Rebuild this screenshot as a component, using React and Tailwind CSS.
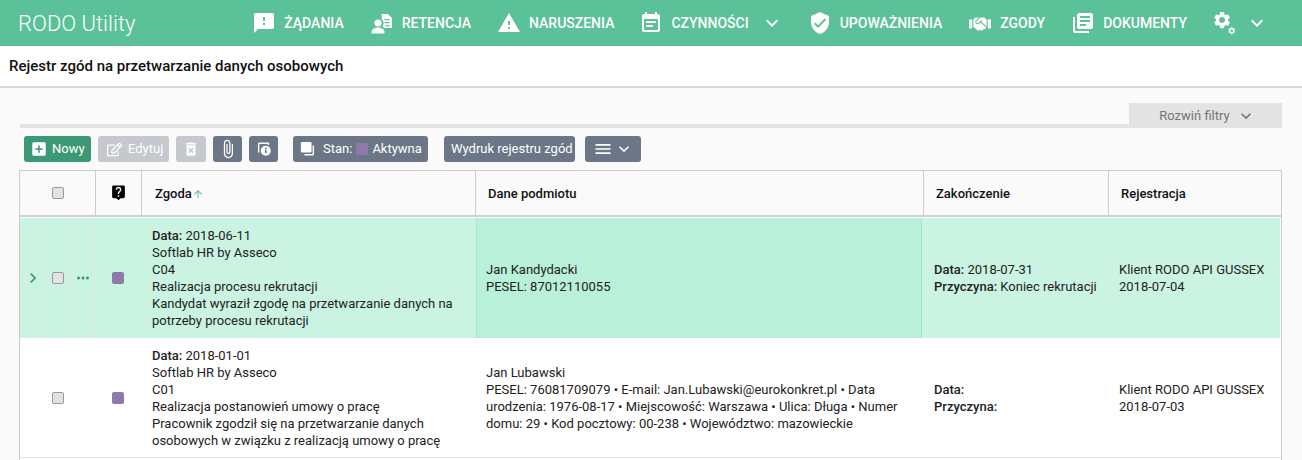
import {
  MdFeedback, MdWarning, MdEventNote, MdVerifiedUser, MdLibraryBooks, MdKeyboardArrowDown,
  MdAddBox, MdDeleteForever, MdAttachFile, MdMenu, MdLiveHelp, MdArrowUpward, MdChevronRight, MdMoreHoriz,
} from 'react-icons/md'
import { FaHandshake, FaRegEdit } from 'react-icons/fa'

const GEAR = 'M19.14 12.94c.04-.3.06-.61.06-.94 0-.32-.02-.64-.07-.94l2.03-1.58c.18-.14.23-.41.12-.61l-1.92-3.32c-.12-.22-.37-.29-.59-.22l-2.39.96c-.5-.38-1.03-.7-1.62-.94l-.36-2.54c-.04-.24-.24-.41-.48-.41h-3.84c-.24 0-.43.17-.47.41l-.36 2.54c-.59.24-1.13.57-1.62.94l-2.39-.96c-.22-.08-.47 0-.59.22L2.74 8.87c-.12.21-.08.47.12.61l2.03 1.58c-.05.3-.09.63-.09.94s.02.64.07.94l-2.03 1.58c-.18.14-.23.41-.12.61l1.92 3.32c.12.22.37.29.59.22l2.39-.96c.5.38 1.03.7 1.62.94l.36 2.54c.05.24.24.41.48.41h3.84c.24 0 .44-.17.47-.41l.36-2.54c.59-.24 1.13-.56 1.62-.94l2.39.96c.22.08.47 0 .59-.22l1.92-3.32c.12-.22.07-.47-.12-.61l-2.01-1.58zM12 15.6c-1.98 0-3.6-1.62-3.6-3.6s1.62-3.6 3.6-3.6 3.6 1.62 3.6 3.6-1.62 3.6-3.6 3.6z'

function PersonDoc({ className }) {
  return (
    <svg viewBox="0 0 24 24" className={className} fill="currentColor">
      <circle cx="8" cy="12" r="3.6" />
      <path d="M1.5 21c0-3 3.6-4.6 6.5-4.6s6.5 1.6 6.5 4.6v1.5h-13z" />
      <path fillRule="evenodd" d="M12 3h6l4 4v10h-7.6c-.6-.7-1.4-1.2-2.2-1.6 1-.9 1.5-2.1 1.5-3.4 0-1.6-.8-3-2-3.8V3zm2.5 5v1.2h5V8zm0 3v1.2h5V11zm1 3v1.2h4V14z" />
    </svg>
  )
}

function Gears({ className }) {
  return (
    <svg viewBox="0 0 24 24" className={className} fill="currentColor">
      <g transform="translate(-1 -1) scale(0.84)"><path d={GEAR} /></g>
      <g transform="translate(14.4 15.4) scale(0.36)"><path d={GEAR} /></g>
    </svg>
  )
}

function StackIcon({ className }) {
  return (
    <svg viewBox="0 0 18 18" className={className} fill="none">
      <rect x="1" y="1" width="12" height="12" rx="1.5" fill="currentColor" />
      <path d="M15 5v9.5a1 1 0 0 1-1 1H5" stroke="currentColor" strokeWidth="1.6" />
    </svg>
  )
}

function InfoIcon({ className }) {
  return (
    <svg viewBox="0 0 18 18" className={className} fill="none">
      <path d="M3 13V3.5a1 1 0 0 1 1-1h10v2" stroke="currentColor" strokeWidth="1.6" />
      <circle cx="11" cy="11" r="5.6" fill="currentColor" />
      <rect x="10.2" y="9.8" width="1.7" height="4" fill="#6b7686" />
      <rect x="10.2" y="7.6" width="1.7" height="1.5" fill="#6b7686" />
    </svg>
  )
}

const navItems = [
  { icon: MdFeedback, label: 'Żądania' },
  { icon: PersonDoc, label: 'Retencja' },
  { icon: MdWarning, label: 'Naruszenia', extra: '-mr-px' },
  { icon: MdEventNote, label: 'Czynności', arrow: true },
  { icon: MdVerifiedUser, label: 'Upoważnienia' },
  { icon: FaHandshake, label: 'Zgody', iconClass: 'px-[1px] py-[2px] translate-y-[1px]' },
  { icon: MdLibraryBooks, label: 'Dokumenty' },
]

function NavItem({ icon: Icon, label, arrow, extra = '', iconClass = '' }) {
  return (
    <a className={`flex items-center gap-2 text-[14px] font-medium uppercase text-white ${extra}`}>
      <Icon className={`w-6 h-6 shrink-0 ${iconClass}`} />
      <span>{label}</span>
      {arrow && <MdKeyboardArrowDown className="w-6 h-6 ml-[3px] -mr-0.5" />}
    </a>
  )
}

function Btn({ className = '', children }) {
  return (
    <button className={`h-[26px] flex items-center rounded-[3px] text-[13px] text-white ${className}`}>
      {children}
    </button>
  )
}

function Check({ className = '' }) {
  return <input type="checkbox" className={`appearance-none block w-3 h-3 rounded-[2px] bg-[#e2e2e2] border border-[#9a9a9a] ${className}`} />
}

const columns = 'grid grid-cols-[76px_46px_334px_448px_185px_173px]'

function Row({ active, consent, subject, end, reg }) {
  const divider = active ? 'border-r border-[#e3ece3]' : 'border-r border-transparent'
  return (
    <div className={`${columns} h-[120px] text-[13px] leading-[17px] text-[#222] ${active ? 'bg-[#caf3e2] mr-[2px] w-[1260px]' : 'bg-white border-b border-[#e4e4e4]'}`}>
      <div className="grid grid-cols-[25px_26px_25px]">
        <div className={`flex items-center justify-center pl-[2px] ${divider}`}>
          {active && <MdChevronRight className="w-[20px] h-[20px] text-[#3b9a75]" />}
        </div>
        <div className={`flex items-center justify-center ${divider}`}><Check /></div>
        <div className={`flex items-center justify-center ${divider}`}>
          {active && <MdMoreHoriz className="w-[18px] h-[18px] text-[#3b9a75]" />}
        </div>
      </div>
      <div className="flex items-center justify-center pr-[2px]">
        <span className="w-3 h-3 rounded-[2px] bg-[#8e79ab]" />
      </div>
      <div className="flex flex-col justify-center pl-[10px] pr-[14px]">{consent}</div>
      <div className={`flex flex-col justify-center pr-[14px] mr-[2px] ${active ? 'pl-[9px] bg-[#b8f0d9] border-x border-[#a5e6cb]' : 'pl-[10px]'}`}>{subject}</div>
      <div className="flex flex-col justify-center pl-[10px] pr-2">{end}</div>
      <div className="flex flex-col justify-center pl-[10px]">{reg}</div>
    </div>
  )
}

function Label({ name, children }) {
  return <p><span className="font-medium">{name}</span> {children}</p>
}

export default function App() {
  return (
    <div className="h-[460px] overflow-hidden bg-[#fafafa] font-['Roboto',sans-serif]">
      <header className="h-[46px] bg-[#5bc198] flex items-center justify-between pl-[18px] pr-[33px]">
        <span className="text-[22px] text-white font-light">RODO Utility</span>
        <nav className="flex items-center gap-[26px]">
          {navItems.map((item) => <NavItem key={item.label} {...item} />)}
          <div className="flex items-center gap-[8px] text-white">
            <Gears className="w-6 h-6" />
            <MdKeyboardArrowDown className="w-6 h-6" />
          </div>
        </nav>
      </header>

      <div className="h-[42px] bg-white border-b-2 border-[#d8d8d8] flex items-center pl-[9px]">
        <h1 className="text-[15px] font-medium text-[#111]">Rejestr zgód na przetwarzanie danych osobowych</h1>
      </div>

      <div className="mt-[15px] ml-5 mr-5 border-b-4 border-[#e3e3e3] flex justify-end">
        <button className="w-[153px] h-[25px] -mb-[4px] bg-[#e3e3e3] flex items-center justify-center gap-[6px] pl-1 text-[13px] text-[#757575]">
          Rozwiń filtry <MdKeyboardArrowDown className="w-5 h-5" />
        </button>
      </div>

      <div className="mt-2 ml-6 flex items-center">
        <Btn className="w-[67px] bg-[#3b9a75] pl-[6px] gap-[4px]">
          <MdAddBox className="w-[18px] h-[18px]" /> Nowy
        </Btn>
        <Btn className="w-[71px] ml-[7px] bg-[#c5c8cd] pl-[9px] gap-[6px]">
          <FaRegEdit className="w-[15px] h-[15px]" /> Edytuj
        </Btn>
        <Btn className="w-[30px] ml-[7px] bg-[#c5c8cd] justify-center">
          <MdDeleteForever className="w-[18px] h-[18px]" />
        </Btn>
        <Btn className="w-[29px] ml-[7px] bg-[#6b7686] justify-center">
          <MdAttachFile className="w-[20px] h-[20px]" />
        </Btn>
        <Btn className="w-[29px] ml-[7px] bg-[#6b7686] justify-center">
          <InfoIcon className="w-[16px] h-[16px]" />
        </Btn>
        <Btn className="w-[135px] ml-[15px] bg-[#6b7686] pl-[7px]">
          <StackIcon className="w-[16px] h-[16px] mr-[7px]" />
          Stan:
          <span className="w-3 h-3 rounded-[1px] bg-[#8e79ab] mx-[4px]" />
          Aktywna
        </Btn>
        <Btn className="w-[131px] ml-4 bg-[#6b7686] pl-[7px]">Wydruk rejestru zgód</Btn>
        <Btn className="w-[56px] ml-[10px] bg-[#6b7686] pl-[8px] gap-[1px]">
          <MdMenu className="w-[20px] h-[20px]" />
          <MdKeyboardArrowDown className="w-[20px] h-[20px]" />
        </Btn>
      </div>

      <div className="mt-2 ml-[19px] w-[1263px] h-[300px] border-l border-t border-[#cccccc] border-r bg-white">
        <div className={`${columns} h-[46px] bg-[#fafafa] border-b-[2px] border-[#d0d0d0] text-[13px] font-medium text-[#111]`}>
          <div className="flex items-center justify-center border-r border-[#cccccc]"><Check /></div>
          <div className="flex items-center justify-center border-r border-[#cccccc] pb-[1px]">
            <MdLiveHelp className="w-[17px] h-[17px] text-black" />
          </div>
          <div className="flex items-center pl-[13px] pt-[2px] border-r border-[#cccccc]">
            Zgoda <MdArrowUpward className="w-[12px] h-[12px] text-[#5bc198]" />
          </div>
          <div className="flex items-center pl-[12px] pt-[2px] border-r border-[#cccccc]">Dane podmiotu</div>
          <div className="flex items-center pl-[12px] pt-[2px] border-r border-[#cccccc]">Zakończenie</div>
          <div className="flex items-center pl-[12px] pt-[2px]">Rejestracja</div>
        </div>
        <div className="pt-[1px]">
          <Row
            active
            consent={<>
              <Label name="Data:">2018-06-11</Label>
              <p>Softlab HR by Asseco</p>
              <p>C04</p>
              <p>Realizacja procesu rekrutacji</p>
              <p>Kandydat wyraził zgodę na przetwarzanie danych na potrzeby procesu rekrutacji</p>
            </>}
            subject={<>
              <p>Jan Kandydacki</p>
              <p>PESEL: 87012110055</p>
            </>}
            end={<>
              <Label name="Data:">2018-07-31</Label>
              <Label name="Przyczyna:">Koniec rekrutacji</Label>
            </>}
            reg={<>
              <p>Klient RODO API GUSSEX</p>
              <p>2018-07-04</p>
            </>}
          />
          <Row
            consent={<>
              <Label name="Data:">2018-01-01</Label>
              <p>Softlab HR by Asseco</p>
              <p>C01</p>
              <p>Realizacja postanowień umowy o pracę</p>
              <p>Pracownik zgodził się na przetwarzanie danych osobowych w związku z realizacją umowy o pracę</p>
            </>}
            subject={<>
              <p>Jan Lubawski</p>
              <p>PESEL: 76081709079 • E-mail: Jan.Lubawski@eurokonkret.pl • Data urodzenia: 1976-08-17 • Miejscowość: Warszawa • Ulica: Długa • Numer domu: 29 • Kod pocztowy: 00-238 • Województwo: mazowieckie</p>
            </>}
            end={<>
              <Label name="Data:" />
              <Label name="Przyczyna:" />
            </>}
            reg={<>
              <p>Klient RODO API GUSSEX</p>
              <p>2018-07-03</p>
            </>}
          />
        </div>
      </div>
    </div>
  )
}
